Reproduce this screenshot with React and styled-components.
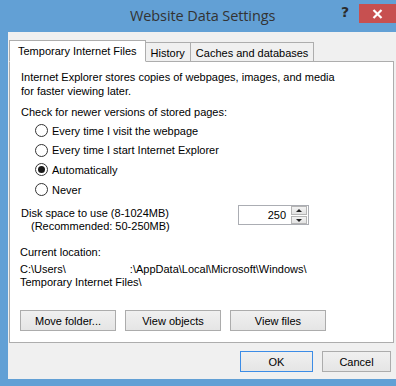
import React from 'react'
import styled, { createGlobalStyle } from 'styled-components'

const GlobalStyle = createGlobalStyle`
  html, body {
    margin: 0;
    padding: 0;
    background: #fff;
  }
  * { box-sizing: border-box; }
`;

const Frame = styled.div`
  width: 396px;
  height: 386px;
  overflow: hidden;
  background: #62a0d5;
  padding: 0 0 7px 8px;
  display: flex;
  flex-direction: column;
  font-family: "Liberation Sans", Arial, sans-serif;
  font-size: 11px;
  color: #000;
`;

const TitleBar = styled.div`
  height: 32px;
  flex: none;
  display: flex;
  align-items: flex-start;
`;

const Title = styled.div`
  flex: 1;
  padding: 6px 0 0 122px;
  font-family: "Open Sans", "Noto Sans", sans-serif;
  font-size: 14.5px;
  color: #333;
  letter-spacing: -0.1px;
`;

const HelpButton = styled.div`
  width: 26px;
  padding: 4px 0 0 8px;
  font-family: "DejaVu Sans", sans-serif;
  font-weight: bold;
  font-size: 14px;
  color: #2b2b2b;
`;

const CloseButton = styled.div`
  margin-top: 4px;
  width: 37px;
  height: 19px;
  background: #c75050;
  display: flex;
  align-items: center;
  justify-content: center;
`;

const Body = styled.div`
  flex: 1;
  background: #f0f0f0;
  display: flex;
  flex-direction: column;
  padding: 8px 2px 0 1px;
`;

const TabStrip = styled.div`
  display: flex;
  align-items: flex-end;
  height: 22px;
  flex: none;
  position: relative;
  z-index: 1;
  margin-bottom: -1px;
`;

const Tab = styled.div`
  height: ${p => (p.$active ? '22px' : '20px')};
  padding: 0 ${p => (p.$active ? '8px' : '5px')};
  background: ${p => (p.$active ? '#fff' : '#f0f0f0')};
  border: 1px solid #adadad;
  border-bottom: 1px solid ${p => (p.$active ? '#fff' : '#adadad')};
  margin-left: ${p => (p.$first ? '0' : '-1px')};
  display: flex;
  align-items: center;
  padding-top: ${p => (p.$active ? '0' : '2px')};
  white-space: nowrap;
  z-index: ${p => (p.$active ? 2 : 1)};
`;

const Panel = styled.div`
  flex: none;
  height: 282px;
  background: #fff;
  border: 1px solid #adadad;
  padding: 6px 10px 0 10px;
  display: flex;
  flex-direction: column;
`;

const Para = styled.div`
  line-height: 14px;
  padding-left: 1px;
  margin-top: ${p => p.$top || '0'};
`;

const RadioList = styled.div`
  display: flex;
  flex-direction: column;
  margin-top: 2px;
  padding-left: 15px;
`;

const RadioRow = styled.label`
  display: flex;
  align-items: center;
  height: 19.6px;
  gap: 4px;
`;

const Radio = styled.span`
  width: 13px;
  height: 13px;
  border-radius: 50%;
  border: 1px solid #333;
  background: #fff;
  display: flex;
  align-items: center;
  justify-content: center;

  &::after {
    content: '';
    width: 7px;
    height: 7px;
    border-radius: 50%;
    background: ${p => (p.$checked ? '#1a1a1a' : 'transparent')};
  }
`;

const DiskRow = styled.div`
  display: flex;
  align-items: flex-start;
  margin-top: 8px;
`;

const DiskLabel = styled.div`
  width: 218px;
  line-height: 13px;
  padding-left: 1px;
`;

const Indent = styled.div`
  padding-left: 10px;
`;

const SpinBox = styled.div`
  margin-top: -2px;
  width: 71px;
  height: 20px;
  border: 1px solid #abadb3;
  display: flex;
  align-items: center;
`;

const SpinValue = styled.div`
  flex: 1;
  text-align: right;
  padding-right: 5px;
`;

const SpinButtons = styled.div`
  width: 16px;
  height: 18px;
  display: flex;
  flex-direction: column;
  gap: 1px;
  margin-right: 1px;
`;

const SpinButton = styled.div`
  flex: 1;
  background: linear-gradient(#f2f2f2, #e3e3e3);
  border: 1px solid #b5b5b5;
  display: flex;
  align-items: center;
  justify-content: center;

  &::after {
    content: '';
    border-left: 3px solid transparent;
    border-right: 3px solid transparent;
    ${p => (p.$down ? 'border-top: 3px solid #222;' : 'border-bottom: 3px solid #222;')}
  }
`;

const Label = styled.div`
  line-height: 13px;
  margin-top: ${p => p.$top || '0'};
`;

const Redacted = styled.span`
  display: inline-block;
  width: 64px;
`;

const ButtonRow = styled.div`
  display: flex;
  gap: 9px;
  margin-top: ${p => p.$top || '0'};
  justify-content: ${p => (p.$end ? 'flex-end' : 'flex-start')};
  padding-right: ${p => (p.$end ? '3px' : '0')};
`;

const Button = styled.div`
  width: ${p => p.$w || '96px'};
  height: 21px;
  border: 1px solid ${p => (p.$default ? '#3c8ce6' : '#acacac')};
  background: linear-gradient(#f0f0f0, #e5e5e5);
  display: flex;
  align-items: center;
  justify-content: center;
  padding-top: 1px;
`;

const Close = () => (
  <svg width="11" height="10" viewBox="0 0 11 10">
    <path d="M1.5 1 L9.5 9 M9.5 1 L1.5 9" stroke="#fff" strokeWidth="2.2" />
  </svg>
);

const radios = [
  'Every time I visit the webpage',
  'Every time I start Internet Explorer',
  'Automatically',
  'Never',
];

const App = () => {
  return (
    <Frame>
      <GlobalStyle />
      <TitleBar>
        <Title>Website Data Settings</Title>
        <HelpButton>?</HelpButton>
        <CloseButton><Close /></CloseButton>
      </TitleBar>
      <Body>
        <TabStrip>
          <Tab $active $first>Temporary Internet Files</Tab>
          <Tab>History</Tab>
          <Tab>Caches and databases</Tab>
        </TabStrip>
        <Panel>
          <Para $top="2px">
            Internet Explorer stores copies of webpages, images, and media<br />
            for faster viewing later.
          </Para>
          <Para $top="7px">Check for newer versions of stored pages:</Para>
          <RadioList>
            {radios.map((r, i) => (
              <RadioRow key={r}>
                <Radio $checked={i === 2} />
                {r}
              </RadioRow>
            ))}
          </RadioList>
          <DiskRow>
            <DiskLabel>
              Disk space to use (8-1024MB)
              <Indent>(Recommended: 50-250MB)</Indent>
            </DiskLabel>
            <SpinBox>
              <SpinValue>250</SpinValue>
              <SpinButtons>
                <SpinButton />
                <SpinButton $down />
              </SpinButtons>
            </SpinBox>
          </DiskRow>
          <Label $top="13px">Current location:</Label>
          <Label $top="4px">
            C:\Users\<Redacted />:\AppData\Local\Microsoft\Windows\
            <br />
            Temporary Internet Files\
          </Label>
          <ButtonRow $top="21px">
            <Button>Move folder...</Button>
            <Button>View objects</Button>
            <Button>View files</Button>
          </ButtonRow>
        </Panel>
        <ButtonRow $end $top="8px">
          <Button $default $w="73px">OK</Button>
          <Button $w="69px">Cancel</Button>
        </ButtonRow>
      </Body>
    </Frame>
  )
}

export default App
